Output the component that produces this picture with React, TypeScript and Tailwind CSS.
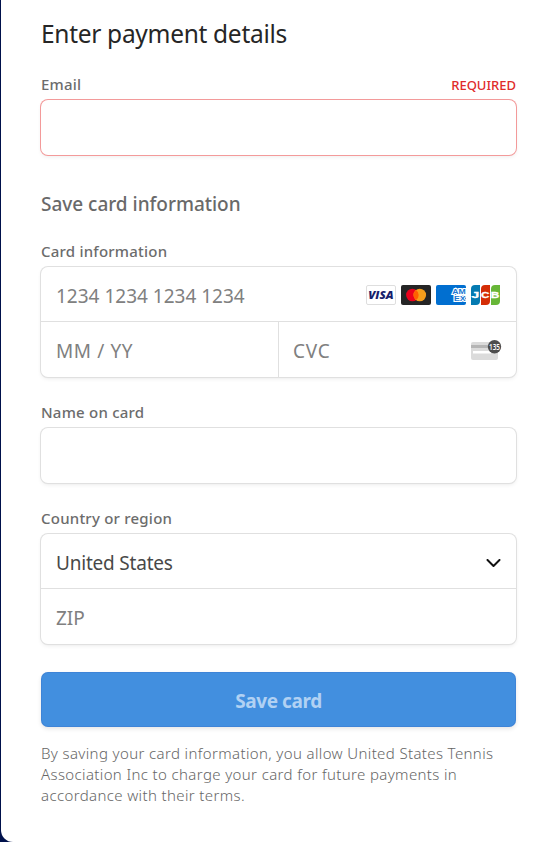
import React from "react";

const groupClass =
  "rounded-[7px] bg-white shadow-[0_0_0_1px_#e0e0e0,0_2px_4px_rgba(0,0,0,0.07),0_1px_1.5px_rgba(0,0,0,0.05)]";

const inputClass =
  "h-full w-full min-w-0 bg-transparent pt-[3px] pl-[15px] text-[19px] text-[#404040] placeholder-[#808080] outline-none";

interface FieldLabelProps {
  htmlFor: string;
  children: React.ReactNode;
}

function FieldLabel({ htmlFor, children }: FieldLabelProps) {
  return (
    <label
      htmlFor={htmlFor}
      className="block text-[15px] leading-5 font-medium tracking-[0.22px] text-[#6c6c6c]"
    >
      {children}
    </label>
  );
}

function VisaIcon() {
  return (
    <svg width="30" height="20" viewBox="0 0 30 20">
      <rect x="0.5" y="0.5" width="29" height="19" rx="1.5" fill="#fff" stroke="#dedede" />
      <text
        x="2.2"
        y="14"
        textLength="25.5"
        lengthAdjust="spacingAndGlyphs"
        fontFamily="Open Sans, sans-serif"
        fontSize="11"
        fontWeight="800"
        fontStyle="italic"
        fill="#171e6c"
      >
        VISA
      </text>
    </svg>
  );
}

function MastercardIcon() {
  return (
    <svg width="30" height="20" viewBox="0 0 30 20">
      <rect width="30" height="20" rx="2" fill="#252525" />
      <circle cx="11.4" cy="10" r="6.3" fill="#eb001b" />
      <circle cx="18.8" cy="10" r="6.3" fill="#f79e1b" />
      <path d="M15.1 4.9a6.3 6.3 0 0 1 0 10.2a6.3 6.3 0 0 1 0-10.2z" fill="#ff5f00" />
    </svg>
  );
}

function AmexIcon() {
  return (
    <svg width="30" height="20" viewBox="0 0 30 20">
      <rect width="30" height="20" rx="2" fill="#016fd0" />
      <g
        fontFamily="Liberation Sans, sans-serif"
        fontSize="6.4"
        fontWeight="700"
        fill="#1a78d2"
        stroke="#fff"
        strokeWidth="1.8"
        paintOrder="stroke"
      >
        <text x="16.3" y="8.6" textLength="13.4" lengthAdjust="spacingAndGlyphs">
          AM
        </text>
        <text x="18" y="16.2" textLength="11.6" lengthAdjust="spacingAndGlyphs">
          EX
        </text>
      </g>
    </svg>
  );
}

function JcbIcon() {
  return (
    <svg width="30" height="20" viewBox="0 0 30 20">
      <path d="M4 0h5v16a4 4 0 0 1-4 4H0V4a4 4 0 0 1 4-4z" fill="#047ab1" />
      <path d="M14 0h5v16a4 4 0 0 1-4 4h-5V4a4 4 0 0 1 4-4z" fill="#d42d06" />
      <path d="M24 0h5v16a4 4 0 0 1-4 4h-5V4a4 4 0 0 1 4-4z" fill="#67b637" />
      <g
        fontFamily="Liberation Sans, sans-serif"
        fontSize="9.5"
        fontWeight="700"
        fill="#fff"
        stroke="#fff"
        strokeWidth="0.3"
      >
        <text x="0.3" y="13.4" textLength="8" lengthAdjust="spacingAndGlyphs">
          J
        </text>
        <text x="10.1" y="13.4" textLength="8.4" lengthAdjust="spacingAndGlyphs">
          C
        </text>
        <text x="19.8" y="13.4" textLength="8.6" lengthAdjust="spacingAndGlyphs">
          B
        </text>
      </g>
    </svg>
  );
}

function CvcIcon() {
  return (
    <svg width="31" height="20" viewBox="0 0 31 20">
      <rect y="2" width="27" height="18" rx="2" fill="#dbdbdb" />
      <rect y="5" width="27" height="3" fill="#b5b5b5" />
      <rect x="2" y="11" width="18" height="2.5" fill="#fff" />
      <circle cx="23.5" cy="6.7" r="6.7" fill="#4d4d4d" />
      <text
        x="18"
        y="9.6"
        textLength="11"
        lengthAdjust="spacingAndGlyphs"
        fontFamily="Open Sans, sans-serif"
        fontSize="8"
        fontWeight="600"
        fill="#fff"
      >
        135
      </text>
    </svg>
  );
}

function App() {
  return (
    <div className="h-[842px] bg-[#00114b] pl-px font-['Noto_Sans','Open_Sans',sans-serif]">
      <form
        className="h-full rounded-bl-[12px] bg-white pt-[17px] pr-[34px] pl-10"
        onSubmit={(e) => e.preventDefault()}
      >
        <h1 className="text-[24.5px] leading-[34px] font-normal tracking-[-0.3px] text-[#262626]">
          Enter payment details
        </h1>

        <div className="mt-[23px] flex h-[21px] items-start justify-between">
          <FieldLabel htmlFor="email">Email</FieldLabel>
          <span className="pt-px text-[13px] leading-5 font-medium text-[#df2b2b]">REQUIRED</span>
        </div>
        <div className="mt-[5px] h-[55px] rounded-[7px] bg-white shadow-[0_0_0_1px_#f39a9a,0_2px_4px_rgba(0,0,0,0.07)]">
          <input id="email" className={inputClass} />
        </div>

        <h2 className="mt-9 text-[19px] leading-[26px] font-medium tracking-[-0.02px] text-[#696969]">
          Save card information
        </h2>

        <div className="mt-6">
          <FieldLabel htmlFor="card">Card information</FieldLabel>
          <div className={`${groupClass} mt-[6px]`}>
            <div className="flex h-[55px] items-center border-b border-[#e0e0e0]">
              <input id="card" className={inputClass} placeholder="1234 1234 1234 1234" />
              <div className="flex shrink-0 gap-[5px] pt-[2px] pr-[15px]">
                <VisaIcon />
                <MastercardIcon />
                <AmexIcon />
                <JcbIcon />
              </div>
            </div>
            <div className="flex h-[55px]">
              <div className="w-[238px] shrink-0 border-r border-[#e0e0e0]">
                <input className={`${inputClass} tracking-[0.6px]`} placeholder="MM / YY" />
              </div>
              <div className="-ml-px flex min-w-0 flex-1 items-center">
                <input className={`${inputClass} tracking-[0.8px]`} placeholder="CVC" />
                <div className="shrink-0 pr-[14px]">
                  <CvcIcon />
                </div>
              </div>
            </div>
          </div>
        </div>

        <div className="mt-[25px]">
          <FieldLabel htmlFor="name">Name on card</FieldLabel>
          <div className={`${groupClass} mt-[6px] h-[55px]`}>
            <input id="name" className={inputClass} />
          </div>
        </div>

        <div className="mt-[25px]">
          <FieldLabel htmlFor="country">Country or region</FieldLabel>
          <div className={`${groupClass} mt-[6px]`}>
            <div className="flex h-[55px] items-center justify-between border-b border-[#e0e0e0] pr-[15px] pl-[15px]">
              <span id="country" className="pt-1 text-[19px] tracking-[-0.2px] text-[#484848]">
                United States
              </span>
              <svg width="15" height="9" viewBox="0 0 15 9" className="mt-1" fill="none">
                <path
                  d="M1.5 1l6 6 6-6"
                  stroke="#111"
                  strokeWidth="2"
                  strokeLinecap="round"
                  strokeLinejoin="round"
                />
              </svg>
            </div>
            <div className="h-[55px]">
              <input className={inputClass} placeholder="ZIP" />
            </div>
          </div>
        </div>

        <button
          type="submit"
          className="mt-7 block h-[55px] w-full rounded-[7px] bg-[#428fdf] pt-[3px] text-[19px] font-bold tracking-[-0.4px] text-[#b1d1f3] shadow-[inset_0_0_0_1px_rgba(50,100,190,0.25),0_2px_4px_rgba(0,0,0,0.1)]"
        >
          Save card
        </button>

        <p className="mt-4 text-[15px] leading-[21px] font-light tracking-[0.37px] whitespace-nowrap text-[#666]">
          By saving your card information, you allow United States Tennis
          <br />
          Association Inc to charge your card for future payments in
          <br />
          accordance with their terms.
        </p>
      </form>
    </div>
  );
}

export default App;
